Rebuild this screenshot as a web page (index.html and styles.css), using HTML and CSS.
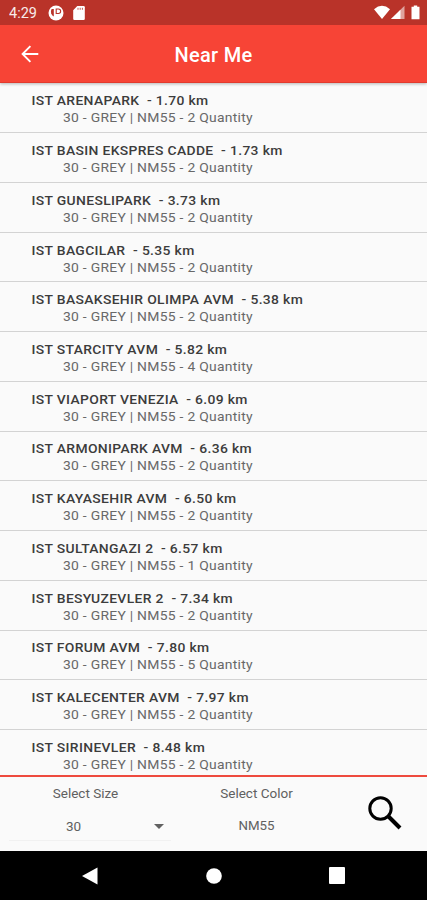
FILE: index.html
```html
<!DOCTYPE html>
<html lang="en">
<head>
<meta charset="utf-8">
<title>Near Me</title>
<link rel="stylesheet" href="styles.css">
</head>
<body>
<div class="screen">
  <header class="top">
    <div class="status">
      <span class="clock">4:29</span>
      <svg class="app-icon" width="16" height="16" viewBox="0 0 16 16"><circle cx="8" cy="8" r="7.500" fill="#fff"/><path d="M3.600 4H5.800V11.500A5.500 5.500 0 0 1 3.600 4z" fill="#b93329"/><path d="M8.200 4h2.200a2.200 2.200 0 0 1 0 4.500H8.200z" fill="none" stroke="#b93329" stroke-width="1.100"/></svg>
      <svg class="sd-icon" width="12" height="14" viewBox="0 0 12 14"><path d="M4.300 0H10.600a1.200 1.200 0 0 1 1.200 1.200V12.800a1.200 1.200 0 0 1-1.200 1.200H1.400a1.200 1.200 0 0 1-1.200-1.200V4.200z" fill="#fff"/><path d="M5 1.800v2M7.200 1.800v2M9.400 1.800v2" stroke="#b93329" stroke-width=".8"/></svg>
      <span class="grow"></span>
      <svg width="48" height="16" viewBox="0 0 48 16"><path d="M0 4.200Q8 -2.600 16 4.200L8 14z" fill="#fff"/><path d="M17 14L30.500 .8V14z" fill="#fff" opacity=".55"/><path d="M17 14L26.500 4.700V14z" fill="#fff"/><path d="M37.500 1.800h2.300V.5h3.400v1.300h2.300V14.200h-8z" fill="#fff"/></svg>
    </div>
    <div class="appbar">
      <svg class="back" width="18" height="18" viewBox="0 0 18 18"><path d="M17.300 9H1.800M9.400 1.200L1.600 9l7.800 7.800" fill="none" stroke="#fff" stroke-width="1.900"/></svg>
      <h1>Near Me</h1>
    </div>
  </header>
  <main class="list">
    <article><h2>IST ARENAPARK &nbsp;- 1.70 km</h2><p>30 - GREY | NM55 - 2 Quantity</p></article>
    <article><h2>IST BASIN EKSPRES CADDE &nbsp;- 1.73 km</h2><p>30 - GREY | NM55 - 2 Quantity</p></article>
    <article><h2>IST GUNESLIPARK &nbsp;- 3.73 km</h2><p>30 - GREY | NM55 - 2 Quantity</p></article>
    <article><h2>IST BAGCILAR &nbsp;- 5.35 km</h2><p>30 - GREY | NM55 - 2 Quantity</p></article>
    <article><h2>IST BASAKSEHIR OLIMPA AVM &nbsp;- 5.38 km</h2><p>30 - GREY | NM55 - 2 Quantity</p></article>
    <article><h2>IST STARCITY AVM &nbsp;- 5.82 km</h2><p>30 - GREY | NM55 - 4 Quantity</p></article>
    <article><h2>IST VIAPORT VENEZIA &nbsp;- 6.09 km</h2><p>30 - GREY | NM55 - 2 Quantity</p></article>
    <article><h2>IST ARMONIPARK AVM &nbsp;- 6.36 km</h2><p>30 - GREY | NM55 - 2 Quantity</p></article>
    <article><h2>IST KAYASEHIR AVM &nbsp;- 6.50 km</h2><p>30 - GREY | NM55 - 2 Quantity</p></article>
    <article><h2>IST SULTANGAZI 2 &nbsp;- 6.57 km</h2><p>30 - GREY | NM55 - 1 Quantity</p></article>
    <article><h2>IST BESYUZEVLER 2 &nbsp;- 7.34 km</h2><p>30 - GREY | NM55 - 2 Quantity</p></article>
    <article><h2>IST FORUM AVM &nbsp;- 7.80 km</h2><p>30 - GREY | NM55 - 5 Quantity</p></article>
    <article><h2>IST KALECENTER AVM &nbsp;- 7.97 km</h2><p>30 - GREY | NM55 - 2 Quantity</p></article>
    <article><h2>IST SIRINEVLER &nbsp;- 8.48 km</h2><p>30 - GREY | NM55 - 2 Quantity</p></article>
  </main>
  <section class="filters">
    <div class="field">
      <label>Select Size</label>
      <div class="select"><span>30</span><svg width="10" height="5" viewBox="0 0 10 5"><path d="M0 0h10L5 5z" fill="#616161"/></svg></div>
    </div>
    <div class="field">
      <label>Select Color</label>
      <div class="value">NM55</div>
    </div>
    <svg class="search" width="34" height="34" viewBox="0 0 34 34"><circle cx="12.500" cy="12.500" r="10.700" fill="none" stroke="#000" stroke-width="3"/><path d="M20.500 20.500L32 32" stroke="#000" stroke-width="4"/></svg>
  </section>
  <nav class="navbar">
    <svg width="16" height="18" viewBox="0 0 16 18"><path d="M0 9L15.500 .5v17z" fill="#fff"/></svg>
    <svg width="16" height="16" viewBox="0 0 16 16"><circle cx="8" cy="8" r="7.800" fill="#fff"/></svg>
    <svg width="16" height="17" viewBox="0 0 16 17"><rect width="16" height="17" rx="1" fill="#fff"/></svg>
  </nav>
</div>
</body>
</html>
```
FILE: styles.css
```css
* { box-sizing: border-box; }
body { margin: 0; font-family: Roboto, sans-serif; }
.screen { width: 427px; height: 900px; display: flex; flex-direction: column; background: #fafafa; overflow: hidden; }
.top { position: relative; flex: none; height: 83px; background: #f74436; border-bottom: 1px solid #e23a2d; box-shadow: 0 1px 3px rgba(0, 0, 0, .28); }
.status { height: 25px; background: #b93329; display: flex; align-items: center; padding: 1px 5px 0 9px; color: #fff; }
.clock { font-size: 14.500px; line-height: 20px; width: 39px; opacity: .9; padding-top: 2px; }
.sd-icon { margin-left: 9px; }
.grow { flex: 1; }
.appbar { height: 57px; display: flex; align-items: center; padding: 1px 0 0 21px; }
h1 { margin: 0; padding: 1px 39px 0 0; flex: 1; text-align: center; color: #fff; font-size: 20px; line-height: 24px; font-weight: 500; letter-spacing: .3px; }
.list { flex: none; height: 692px; padding-top: .600px; overflow: hidden; }
article { height: 49.730px; padding: 8.800px 0 0 31.500px; border-bottom: 1px solid #d3d3d3; white-space: nowrap; }
h2, p { margin: 0; font-size: 13.900px; transform: scaleY(.95); }
h2 { line-height: 17px; font-weight: 500; color: #3c3c3c; letter-spacing: .34px; }
p { padding-left: 31.500px; line-height: 16px; color: #686868; letter-spacing: .27px; }
.filters { flex: none; height: 76px; border-top: 2px solid #ee4a3e; display: flex; color: #606060; }
.field { width: 171px; padding-top: 7px; text-align: center; font-size: 13.500px; line-height: 18px; }
.select { display: flex; align-items: center; justify-content: space-between; margin: 10px 0 0 9px; padding: 0 7px 0 57px; height: 29px; border-bottom: 1px solid #f1f1f1; }
.value { margin-top: 15px; font-size: 13.300px; }
.search { margin: 19px 0 0 26px; }
.navbar { flex: 1; background: #000; display: flex; align-items: center; justify-content: space-between; padding: 0 82px; }
```
